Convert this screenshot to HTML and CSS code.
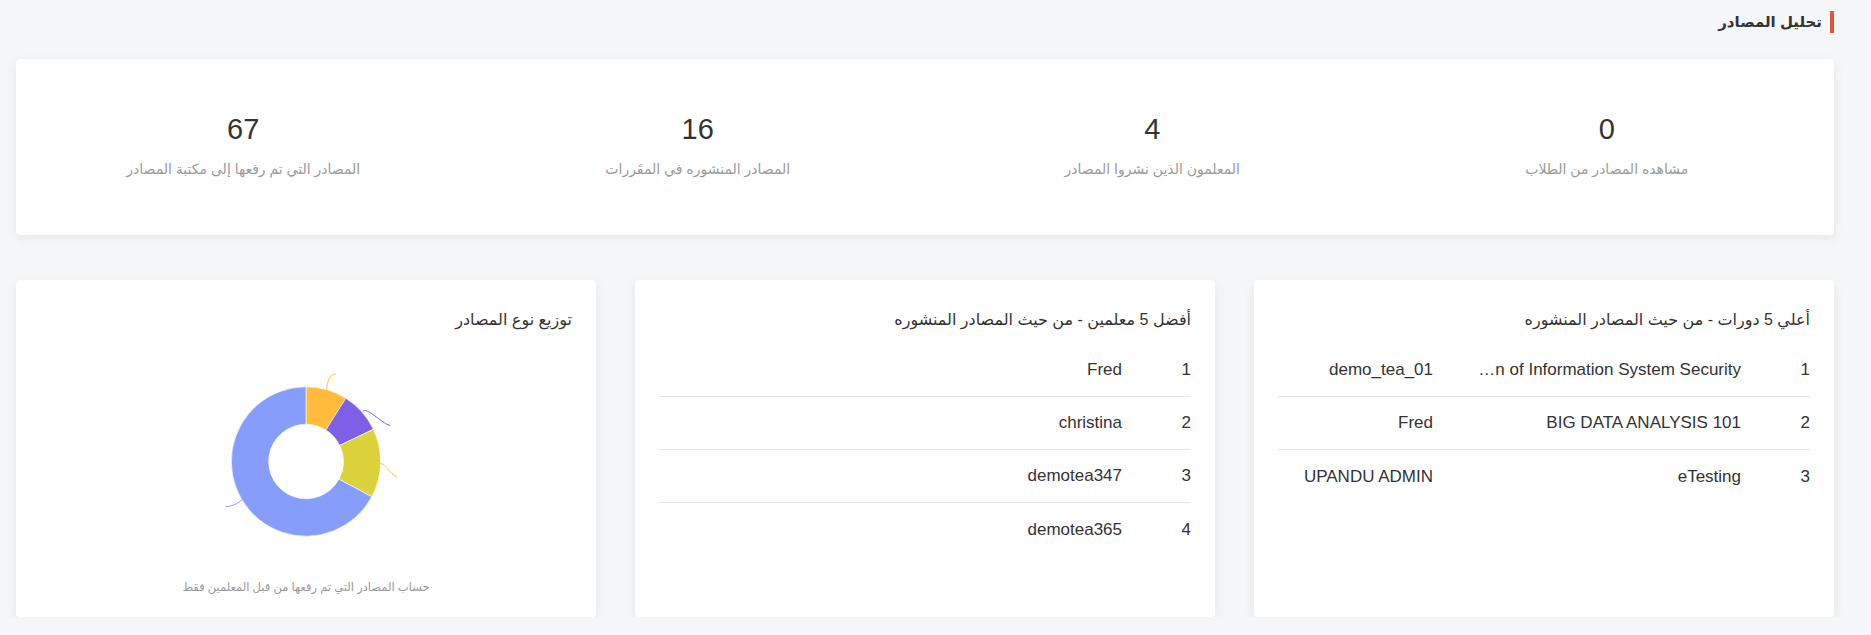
FILE: index.html
```html
<!DOCTYPE html>
<html lang="ar" dir="rtl">
<head>
<meta charset="utf-8">
<title>تحليل المصادر</title>
<link rel="stylesheet" href="styles.css">
</head>
<body>
<div class="page">
  <h2 class="section-title">تحليل المصادر</h2>

  <div class="stats-card">
    <div class="stat">
      <div class="stat-value">0</div>
      <div class="stat-label">مشاهده المصادر من الطلاب</div>
    </div>
    <div class="stat">
      <div class="stat-value">4</div>
      <div class="stat-label">المعلمون الذين نشروا المصادر</div>
    </div>
    <div class="stat">
      <div class="stat-value">16</div>
      <div class="stat-label">المصادر المنشوره في المقَررات</div>
    </div>
    <div class="stat">
      <div class="stat-value">67</div>
      <div class="stat-label">المصادر التي تم رفعها إلى مكتبة المصادر</div>
    </div>
  </div>

  <div class="cards-row">
    <div class="panel">
      <h3 class="panel-title">أعلي 5 دورات - من حيث المصادر المنشوره</h3>
      <div class="rank-list">
        <div class="rank-row rank-row-3">
          <span class="rank-num">1</span>
          <span class="rank-course">Protection of Information System Security</span>
          <span class="rank-teacher">demo_tea_01</span>
        </div>
        <div class="rank-row rank-row-3">
          <span class="rank-num">2</span>
          <span class="rank-course">BIG DATA ANALYSIS 101</span>
          <span class="rank-teacher">Fred</span>
        </div>
        <div class="rank-row rank-row-3">
          <span class="rank-num">3</span>
          <span class="rank-course">eTesting</span>
          <span class="rank-teacher">UPANDU ADMIN</span>
        </div>
      </div>
    </div>

    <div class="panel">
      <h3 class="panel-title">أفضل 5 معلمين - من حيث المصادر المنشوره</h3>
      <div class="rank-list">
        <div class="rank-row">
          <span class="rank-num">1</span>
          <span class="rank-name">Fred</span>
        </div>
        <div class="rank-row">
          <span class="rank-num">2</span>
          <span class="rank-name">christina</span>
        </div>
        <div class="rank-row">
          <span class="rank-num">3</span>
          <span class="rank-name">demotea347</span>
        </div>
        <div class="rank-row">
          <span class="rank-num">4</span>
          <span class="rank-name">demotea365</span>
        </div>
      </div>
    </div>

    <div class="panel panel-chart">
      <h3 class="panel-title">توزيع نوع المصادر</h3>
      <svg class="donut" width="300" height="220" viewBox="0 0 300 220" xmlns="http://www.w3.org/2000/svg">
        <path d="M150 35 A75 75 0 0 1 190 46.56 L170 78.28 A37.5 37.5 0 0 0 150 72.5 Z" fill="#ffbb3b" stroke="#ffffff" stroke-width="0.6"/>
        <path d="M190 46.56 A75 75 0 0 1 217.68 77.69 L183.84 93.84 A37.5 37.5 0 0 0 170 78.28 Z" fill="#7d60e6" stroke="#ffffff" stroke-width="0.6"/>
        <path d="M217.68 77.69 A75 75 0 0 1 216.09 145.45 L183.05 127.73 A37.5 37.5 0 0 0 183.84 93.84 Z" fill="#dcd23c" stroke="#ffffff" stroke-width="0.6"/>
        <path d="M216.09 145.45 A75 75 0 1 1 150 35 L150 72.5 A37.5 37.5 0 1 0 183.05 127.73 Z" fill="#879dfc" stroke="#ffffff" stroke-width="0.6"/>
        <path d="M170.8 37.9 C171.5 30 173 23 179.7 22" fill="none" stroke="#ffbb3b" stroke-width="1"/>
        <path d="M207 59.5 C211 57 216 62 223 67 S231 73 234.7 73.7" fill="none" stroke="#7d60e6" stroke-width="1"/>
        <path d="M225 112 C231 113 233 122 241.3 125.3" fill="none" stroke="#dcd23c" stroke-width="1"/>
        <path d="M85.6 148.5 C80 153 76 155 69 155.3" fill="none" stroke="#879dfc" stroke-width="1"/>
      </svg>
      <p class="chart-note">حساب المصادر التي تم رفعها من قبل المعلمين فقط</p>
    </div>
  </div>
</div>
</body>
</html>
```

FILE: styles.css
```css
* {
  box-sizing: border-box;
}

html,
body {
  margin: 0;
  padding: 0;
}

body {
  background: #f5f6f8;
  font-family: "Liberation Sans", "DejaVu Sans", sans-serif;
  color: #333333;
}

.page {
  padding: 11px 37px 0 16px;
}

.section-title {
  margin: 0 0 26px;
  font-size: 15px;
  font-weight: bold;
  line-height: 22px;
  color: #333333;
  border-right: 4px solid #e0533f;
  padding-right: 8px;
}

.stats-card {
  background: #ffffff;
  border-radius: 4px;
  box-shadow: 0 3px 12px rgba(0, 0, 0, 0.07);
  height: 176px;
  display: grid;
  grid-template-columns: repeat(4, 1fr);
  align-items: center;
  margin-bottom: 45px;
}

.stat {
  text-align: center;
}

.stat-value {
  font-size: 29px;
  line-height: 29px;
  color: #333333;
}

.stat-label {
  margin-top: 15px;
  font-size: 14px;
  line-height: 20px;
  color: #9a9a9a;
}

.cards-row {
  display: grid;
  grid-template-columns: repeat(3, 1fr);
  gap: 39px;
}

.panel {
  background: #ffffff;
  border-radius: 4px;
  box-shadow: 0 3px 12px rgba(0, 0, 0, 0.07);
  height: 337px;
  padding: 28px 24px 20px;
}

.panel-title {
  margin: 0 0 12px;
  font-size: 16px;
  font-weight: normal;
  line-height: 24px;
  color: #333333;
}

.rank-row {
  display: grid;
  grid-template-columns: 69px 1fr;
  align-items: center;
  height: 53px;
  border-bottom: 1px solid #e6e6e6;
  font-size: 17px;
  color: #333333;
}

.rank-row:last-child {
  border-bottom: none;
}

.rank-row-3 {
  grid-template-columns: 69px 271px 1fr;
}

.rank-course {
  overflow: hidden;
  white-space: nowrap;
  text-overflow: ellipsis;
}

.rank-teacher {
  padding-right: 37px;
  white-space: nowrap;
}

.panel-chart {
  display: flex;
  flex-direction: column;
  align-items: stretch;
}

.donut {
  display: block;
  margin: 8px auto 0;
}

.chart-note {
  margin: 6px 0 0;
  font-size: 11.5px;
  line-height: 20px;
  color: #9a9a9a;
  text-align: center;
}
```
